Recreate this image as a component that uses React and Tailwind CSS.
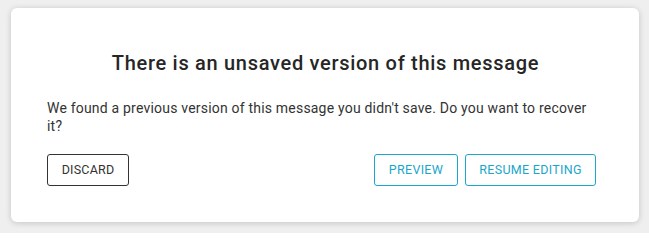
export default function App() {
  return (
    <div className="w-[649px] h-[233px] bg-[#efefef] pt-2 pl-[11px]" style={{ fontFamily: "Roboto, sans-serif" }}>
      <div className="w-[628px] h-[214px] bg-white rounded-md shadow-[0_1px_6px_rgba(0,0,0,0.18)] pl-9 pr-[43px] pt-[43px]">
        <h2 className="text-center text-[20px] font-medium text-[#262626] leading-6 tracking-[0.7px] ml-[-36px] mr-[-43px] pl-[1px]">There is an unsaved version of this message</h2>
        <p className="mt-[24px] text-[14px] leading-[18px] tracking-[0.2px] text-[#333]">We found a previous version of this message you didn't save. Do you want to recover it?</p>
        <div className="mt-[19px] flex items-center">
          <button className="h-8 w-[82px] border border-[#333] rounded-[3px] text-[12.5px] tracking-[0.2px] text-[#333] uppercase">Discard</button>
          <div className="ml-auto flex gap-[7px]">
            <button className="h-8 w-[84px] border border-[#1ba6cc] rounded-[3px] text-[12.5px] tracking-[0.3px] text-[#1ba6cc] uppercase">Preview</button>
            <button className="h-8 w-[131px] border border-[#1ba6cc] rounded-[3px] text-[12.5px] tracking-[0.3px] text-[#1ba6cc] uppercase">Resume editing</button>
          </div>
        </div>
      </div>
    </div>
  );
}
